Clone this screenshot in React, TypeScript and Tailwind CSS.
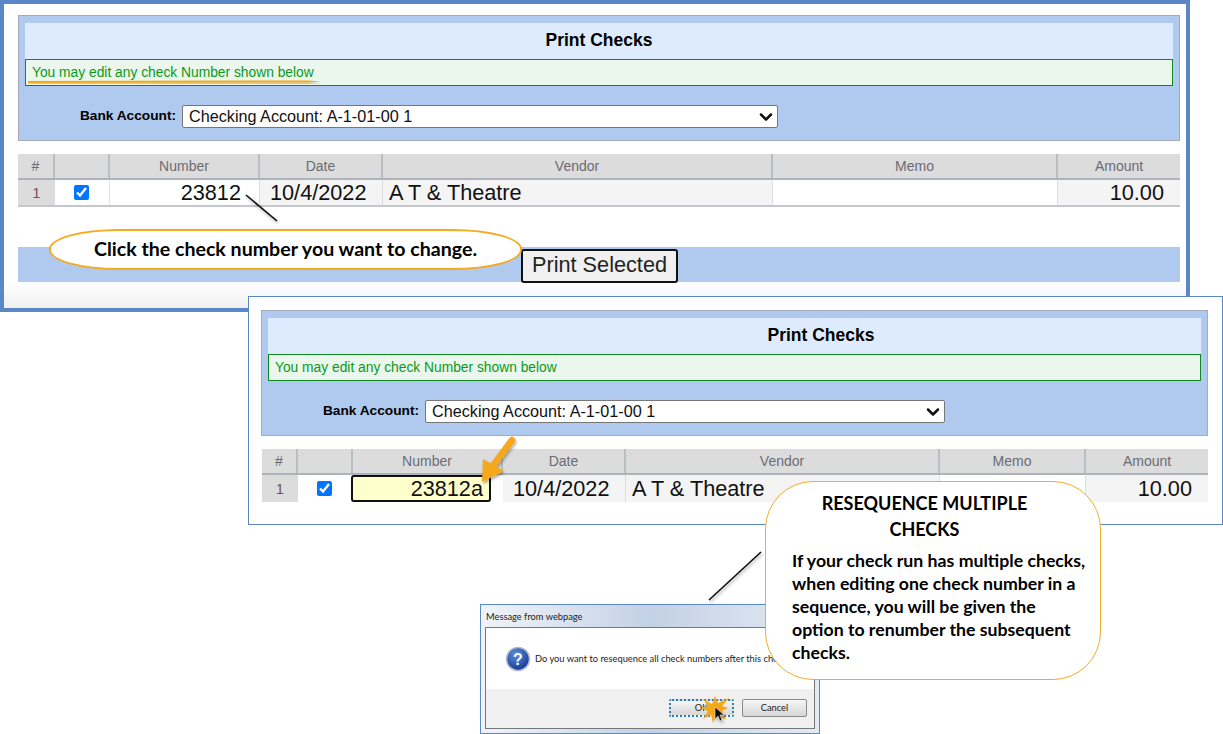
import { ReactNode } from 'react';
import { ChevronDown } from 'lucide-react';

type ChecksProps = {
  panelClass: string;
  titleClass: string;
  labelClass: string;
  selectClass: string;
  tableClass: string;
  gridClass: string;
  number: ReactNode;
};

const HeadCell = ({ children }: { children?: ReactNode }) => (
  <div className="flex h-[24px] items-center justify-center border-r-2 border-[#b9bec6] bg-[#dcdcdc] text-[14px] text-[#6b6b75] last:border-r-0">
    {children}
  </div>
);

const PrintChecks = ({ panelClass, titleClass, labelClass, selectClass, tableClass, gridClass, number }: ChecksProps) => (
  <>
    <div className={`h-[126px] border border-[#a5acb8] bg-[#b0c9ee] px-[6px] pt-[7px] ${panelClass}`}>
      <div className={`flex h-[36px] items-center justify-center bg-[#deebfe] pb-[2px] text-[17.5px] font-bold text-black ${titleClass}`}>
        Print Checks
      </div>
      <div className="flex h-[27px] items-center border border-[#0f8a1f] bg-[#ebf6ec] pl-[6px] pt-[1px] text-[13.8px] text-[#0a9a1a]">
        You may edit any check Number shown below
      </div>
      <div className="mt-[19px] flex items-center">
        <span className={`pb-[1px] text-right text-[13.7px] font-bold text-black ${labelClass}`}>Bank Account:</span>
        <div className={`relative ml-[6px] ${selectClass}`}>
          <select
            className="h-[23px] w-full appearance-none rounded-[2px] border border-[#777] bg-white pl-[6px] text-[16.2px] leading-[19px] text-[#111]"
            defaultValue="a"
          >
            <option value="a">Checking Account: A-1-01-00 1</option>
          </select>
          <ChevronDown size={20} strokeWidth={3} className="pointer-events-none absolute right-[2px] top-[2px] text-[#111]" />
        </div>
      </div>
    </div>
    <div className={`mt-[13px] ${tableClass}`}>
      <div className={`grid border-b-2 border-[#aeb3bb] ${gridClass}`}>
        <HeadCell>#</HeadCell>
        <HeadCell />
        <HeadCell>Number</HeadCell>
        <HeadCell>Date</HeadCell>
        <HeadCell>Vendor</HeadCell>
        <HeadCell>Memo</HeadCell>
        <HeadCell>Amount</HeadCell>
      </div>
      <div className={`grid h-[27px] border-b-2 border-[#c4c7cc] text-[21.7px] leading-none text-[#111] ${gridClass}`}>
        <div className="flex items-center justify-center bg-[#dcdcdc] text-[14px] text-[#7a4a4a]">1</div>
        <div className="flex items-center justify-center border-r border-[#e2e2e2] bg-white pr-[2px]">
          <input type="checkbox" defaultChecked className="size-[15px] accent-[#0075ff]" />
        </div>
        {number}
        <div className="flex items-center border-r border-[#dedede] bg-[#f4f4f4] pl-[10px]">10/4/2022</div>
        <div className="flex items-center border-r border-[#dedede] bg-[#f4f4f4] pl-[6px]">A T &amp; Theatre</div>
        <div className="border-r border-[#dedede] bg-white" />
        <div className="flex items-center justify-end bg-[#f4f4f4] pr-[16px]">10.00</div>
      </div>
    </div>
  </>
);

const QuestionIcon = () => (
  <svg width="26" height="26" viewBox="0 0 26 26">
    <defs>
      <radialGradient id="qfill" cx="40%" cy="30%" r="75%">
        <stop offset="0%" stopColor="#5f8fe0" />
        <stop offset="100%" stopColor="#12328f" />
      </radialGradient>
    </defs>
    <circle cx="13" cy="13" r="11.5" fill="url(#qfill)" stroke="#b4bcc8" strokeWidth="1.6" />
    <text x="13" y="18.5" textAnchor="middle" fontSize="16" fontWeight="700" fill="#fff" fontFamily="Liberation Sans, sans-serif">
      ?
    </text>
  </svg>
);

const MessageDialog = () => (
  <div className="absolute left-[480px] top-[604px] flex h-[130px] w-[340px] flex-col border border-[#5b87c7] bg-gradient-to-r from-[#f0f4f8] via-[#c3d1e6] to-[#e4eaf2] font-['Lato',sans-serif]">
    <div className="flex h-[22px] items-center pl-[5px] pt-[1px] text-[9.3px] text-[#222]">Message from webpage</div>
    <div className="mx-[4px] mb-[4px] flex flex-1 flex-col border border-[#777] bg-white">
      <div className="flex flex-1 items-center whitespace-nowrap pl-[19px] text-[9.3px] text-[#222]">
        <QuestionIcon />
        <span className="ml-[4px]">Do you want to resequence all check numbers after this check?</span>
      </div>
      <div className="flex h-[39px] items-start justify-end gap-[8px] bg-[#f0f0f0] pr-[7px] pt-[10px] text-[9.3px] text-[#222]">
        <div className="flex h-[18px] w-[65px] items-center justify-center rounded-[2px] border-2 border-dotted border-[#2a7fb8] bg-gradient-to-b from-[#f6f6f6] to-[#d6d6d6]">
          OK
        </div>
        <div className="flex h-[18px] w-[65px] items-center justify-center rounded-[2px] border border-[#8a8a8a] bg-gradient-to-b from-[#f6f6f6] to-[#d6d6d6]">
          Cancel
        </div>
      </div>
    </div>
  </div>
);

// lines, arrow and the click burst that sit over the screenshots
const Annotations = () => (
  <svg className="pointer-events-none absolute left-0 top-0" width="1223" height="734" viewBox="0 0 1223 734">
    <defs>
      <filter id="soft" x="-30%" y="-30%" width="160%" height="160%">
        <feDropShadow dx="1" dy="2" stdDeviation="1.5" floodColor="#000" floodOpacity="0.35" />
      </filter>
    </defs>
    <path d="M28 81 L308 80.5 L320 81.5 L308 82.5 L28 83 Z" fill="#f7a90f" filter="url(#soft)" />
    <path d="M246 195 L277 221" stroke="#111" strokeWidth="1.6" filter="url(#soft)" />
    <path d="M761 552 L709 600" stroke="#111" strokeWidth="1.6" filter="url(#soft)" />
    <g filter="url(#soft)">
      <path d="M512 440 L492 467" stroke="#f5a81c" strokeWidth="6.5" strokeLinecap="round" />
      <path d="M482 482 L483 459 L504 471 Z" fill="#f5a81c" />
    </g>
    <path
      d="M703 699 L712 704 L715 696 L718 703 L729 698 L722 706 L728 708 L722 711 L726 720 L717 715 L713 723 L711 715 L703 719 L708 711 L701 708 L708 706 Z"
      fill="#f5a81c"
    />
    <path d="M715 707 L715 719 L718 716 L720 721 L722 720 L720 715 L724 715 Z" fill="#111" stroke="#fff" strokeWidth="0.5" filter="url(#soft)" />
  </svg>
);

export default function App() {
  return (
    <div className="relative h-[734px] w-[1223px] overflow-hidden bg-white font-['Liberation_Sans',Arial,sans-serif]">
      <div className="absolute left-0 top-0 h-[312px] w-[1190px] border-4 border-[#5b87c7] bg-white pl-[14px] pr-[6px] pt-[11px]">
        <PrintChecks
          panelClass="w-[1162px]"
          titleClass=""
          labelClass="w-[151px]"
          selectClass="w-[596px]"
          tableClass="w-[1162px]"
          gridClass="grid-cols-[37px_55px_150px_123px_390px_285px_122px]"
          number={
            <div className="flex items-center justify-end border-r border-[#dedede] bg-white pr-[18px]">23812</div>
          }
        />
        <div className="mt-[40px] h-[35px] w-[1162px] bg-[#b0c9ee]" />
        <div className="absolute bottom-0 left-0 h-[26px] w-full bg-gradient-to-b from-white to-[#f0f0f0]" />
      </div>

      <div className="absolute left-[521px] top-[249px] flex h-[34px] w-[157px] items-center justify-center rounded-[3px] border-2 border-[#111] bg-[#f0f0f0] pb-[1px] text-[21.7px] text-[#222]">
        Print Selected
      </div>
      <div className="absolute left-[49px] top-[229px] flex h-[41px] w-[473px] items-center justify-center rounded-[70px/20px] border-2 border-[#f5ab1e] bg-white pb-[2px] font-['Lato',sans-serif] text-[19.6px] font-bold text-black">
        Click the check number you want to change.
      </div>

      <div className="absolute left-[248px] top-[296px] h-[229px] w-[975px] border border-[#5b87c7] bg-white pl-[12px] pt-[13px]">
        <PrintChecks
          panelClass="w-[947px]"
          titleClass="pl-[173px]"
          labelClass="w-[151px]"
          selectClass="w-[520px]"
          tableClass="ml-[1px] w-[946px]"
          gridClass="grid-cols-[36px_55px_150px_123px_314px_146px_122px]"
          number={
            <div className="flex items-center bg-white">
              <div className="-ml-[2px] flex h-[27px] w-[140px] items-center justify-end rounded-[3px] border-2 border-[#111] bg-[#ffffcc] pr-[6px]">
                23812a
              </div>
            </div>
          }
        />
      </div>

      <MessageDialog />

      <div className="absolute left-[765px] top-[481px] h-[199px] w-[336px] rounded-[48px] border border-[#f0ac2a] bg-white pl-[26px] pt-[8px] font-['Lato',sans-serif] font-bold text-black">
        <div className="w-[265px] text-center text-[18px] leading-[26px]">RESEQUENCE MULTIPLE CHECKS</div>
        <p className="mt-[7px] w-[297px] text-[17.7px] leading-[23px]">
          If your check run has multiple checks, when editing one check number in a sequence, you will be given the option to renumber the subsequent checks.
        </p>
      </div>

      <Annotations />
    </div>
  );
}
